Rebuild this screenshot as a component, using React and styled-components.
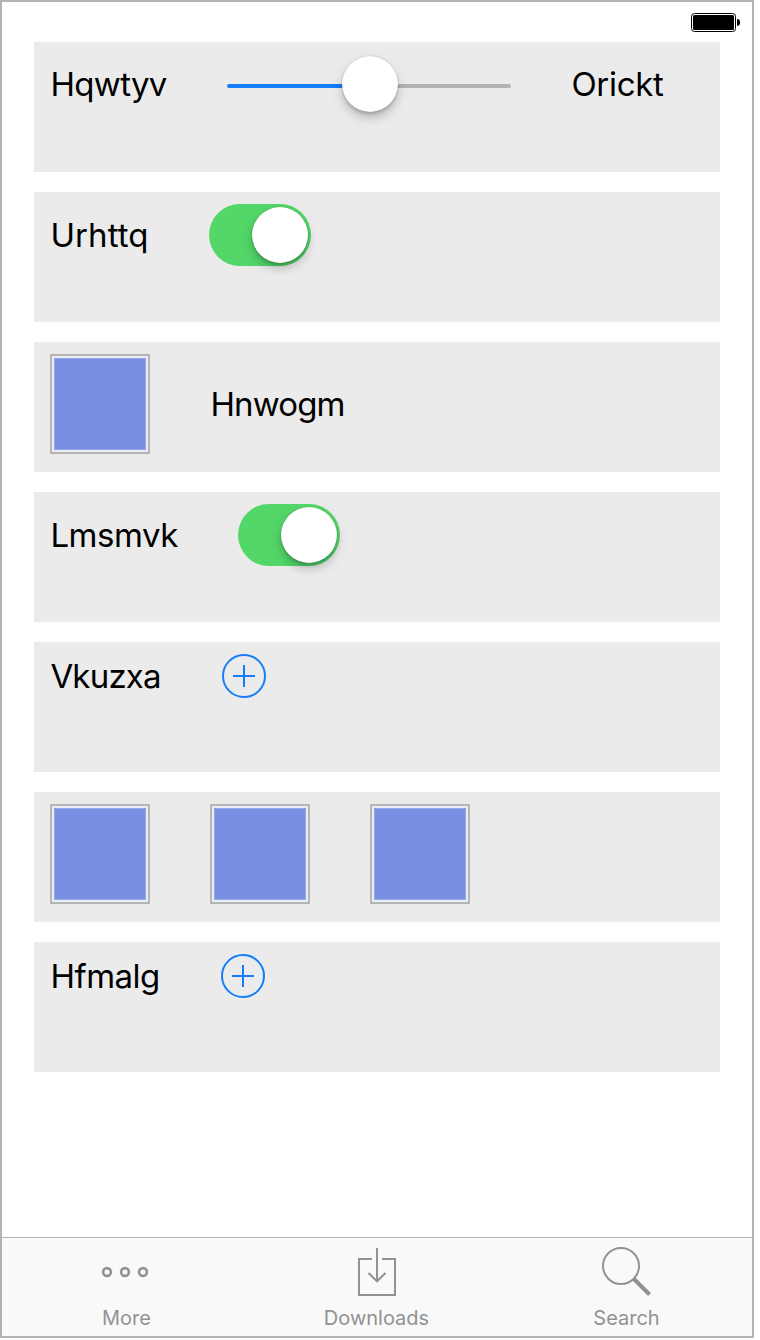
import React from "react";
import styled, { createGlobalStyle } from "styled-components";

const Global = createGlobalStyle`
  *, *::before { box-sizing: border-box; }
  body { margin: 0; background: #fff; font-family: Inter, "Liberation Sans", sans-serif; }
`;

const Phone = styled.div`
  width: 754px;
  height: 1338px;
  border: 2px solid #b2b2b2;
  background: #fff;
  display: flex;
  flex-direction: column;
`;

const StatusBar = styled.header`
  height: 40px;
  flex: none;
  display: flex;
  justify-content: flex-end;
  padding: 11px 12px 0 0;
`;

const Battery = styled.div`
  display: flex;
  align-items: center;
  gap: 1px;
  height: 19px;
`;

const BatteryCase = styled.div`
  width: 45px;
  height: 19px;
  border: 1px solid #000;
  border-radius: 3.5px;
  padding: 1px;
`;

const BatteryFill = styled.div`
  height: 100%;
  border-radius: 1.5px;
  background: #000;
`;

const BatteryCap = styled.div`
  width: 3px;
  height: 7px;
  border-radius: 0 3px 3px 0;
  background: #000;
`;

const List = styled.main`
  flex: 1;
  display: flex;
  flex-direction: column;
  gap: 20px;
  padding: 0 32px;
`;

const Row = styled.section`
  height: 130px;
  background: #ebebeb;
  padding: 12px 16px;
  display: flex;
  align-items: flex-start;
  gap: 60px;
`;

const Label = styled.span`
  flex: none;
  width: ${(p) => p.$width}px;
  height: ${(p) => p.$height}px;
  padding-left: 0.4px;
  line-height: ${(p) => p.$height}px;
  font-size: 33px;
  letter-spacing: ${(p) => p.$tracking || 0}px;
  white-space: nowrap;
  color: #000;
`;

const SliderBox = styled.div`
  width: 284px;
  height: 60px;
  display: grid;
  align-items: center;
  justify-items: center;
`;

const Track = styled.div`
  grid-area: 1 / 1;
  width: 100%;
  height: 4px;
  margin-top: 4px;
  border-radius: 2px;
  background: linear-gradient(to right, #147efb 50%, #b4b4b4 50%);
`;

const Knob = styled.div`
  grid-area: 1 / 1;
  width: 56px;
  height: 56px;
  margin-left: ${(p) => p.$shift || 0}px;
  border-radius: 50%;
  background: #fff;
  box-shadow: 0 0 1px rgba(0, 0, 0, 0.35), 0 6px 8px rgba(0, 0, 0, 0.17),
    0 3px 2px rgba(0, 0, 0, 0.1), 0 4px 20px rgba(0, 0, 0, 0.06);
`;

const Toggle = styled.div`
  width: 102px;
  height: 62px;
  border-radius: 31px;
  background: #53d769;
  padding: 3px;
  display: flex;
  justify-content: flex-end;
`;

const Swatch = styled.div`
  width: 100px;
  height: 100px;
  border: 2px solid #b5b5b5;
  background: #e9edf6;
  padding: 2px;
  &::before {
    content: "";
    display: block;
    height: 100%;
    background: #7790e2;
    border: 1px solid #93a7e8;
  }
`;

const TabBar = styled.nav`
  height: 99px;
  flex: none;
  border-top: 1px solid #b2b2b2;
  background: #f9f9f9;
  display: grid;
  grid-template-columns: repeat(3, 1fr);
`;

const Tab = styled.div`
  display: flex;
  flex-direction: column;
  align-items: center;
  padding-top: 4px;
  color: #929292;
`;

const TabLabel = styled.span`
  font-size: 20px;
  line-height: 24px;
  margin-top: 4px;
  padding-right: 1px;
  letter-spacing: ${(p) => p.$tracking || 0}px;
`;

const PlusIcon = () => (
  <svg width="44" height="44" viewBox="0 0 44 44" fill="none" stroke="#147efb" strokeWidth="2">
    <circle cx="22" cy="22" r="21" />
    <path d="M22 11V33M11 22H33" />
  </svg>
);

const TabIcon = ({ children }) => (
  <svg width="60" height="60" viewBox="0 0 60 60" fill="none" stroke="currentColor" strokeWidth="2">
    {children}
  </svg>
);

const Switch = () => (
  <Toggle>
    <Knob />
  </Toggle>
);

export default function App() {
  return (
    <>
      <Global />
      <Phone>
        <StatusBar>
          <Battery>
            <BatteryCase>
              <BatteryFill />
            </BatteryCase>
            <BatteryCap />
          </Battery>
        </StatusBar>
        <List>
          <Row>
            <Label $width={117} $height={60} $tracking={-0.65}>Hqwtyv</Label>
            <SliderBox>
              <Track />
              <Knob $shift={2} />
            </SliderBox>
            <Label $width={93} $height={60} $tracking={-0.3}>Orickt</Label>
          </Row>
          <Row>
            <Label $width={99} $height={62} $tracking={0.1}>Urhttq</Label>
            <Switch />
          </Row>
          <Row>
            <Swatch />
            <Label $width={135} $height={100} $tracking={-0.85}>Hnwogm</Label>
          </Row>
          <Row>
            <Label $width={128} $height={62} $tracking={-0.45}>Lmsmvk</Label>
            <Switch />
          </Row>
          <Row>
            <Label $width={112} $height={44} $tracking={-0.8}>Vkuzxa</Label>
            <PlusIcon />
          </Row>
          <Row>
            <Swatch />
            <Swatch />
            <Swatch />
          </Row>
          <Row>
            <Label $width={111} $height={44} $tracking={-0.5}>Hfmalg</Label>
            <PlusIcon />
          </Row>
        </List>
        <TabBar>
          <Tab>
            <TabIcon>
              <g strokeWidth="2.6">
                <circle cx="10" cy="30" r="3.9" />
                <circle cx="28" cy="30" r="3.9" />
                <circle cx="46" cy="30" r="3.9" />
              </g>
            </TabIcon>
            <TabLabel>More</TabLabel>
          </Tab>
          <Tab>
            <TabIcon>
              <path d="M25 17H12V53H48V17H35M30 6V39M21.5 31L30 39.3L38.5 31" />
            </TabIcon>
            <TabLabel>Downloads</TabLabel>
          </Tab>
          <Tab>
            <TabIcon>
              <circle cx="24" cy="24" r="18" />
              <path d="M36.5 36.5L52.5 52.5" strokeWidth="4" />
            </TabIcon>
            <TabLabel>Search</TabLabel>
          </Tab>
        </TabBar>
      </Phone>
    </>
  );
}
